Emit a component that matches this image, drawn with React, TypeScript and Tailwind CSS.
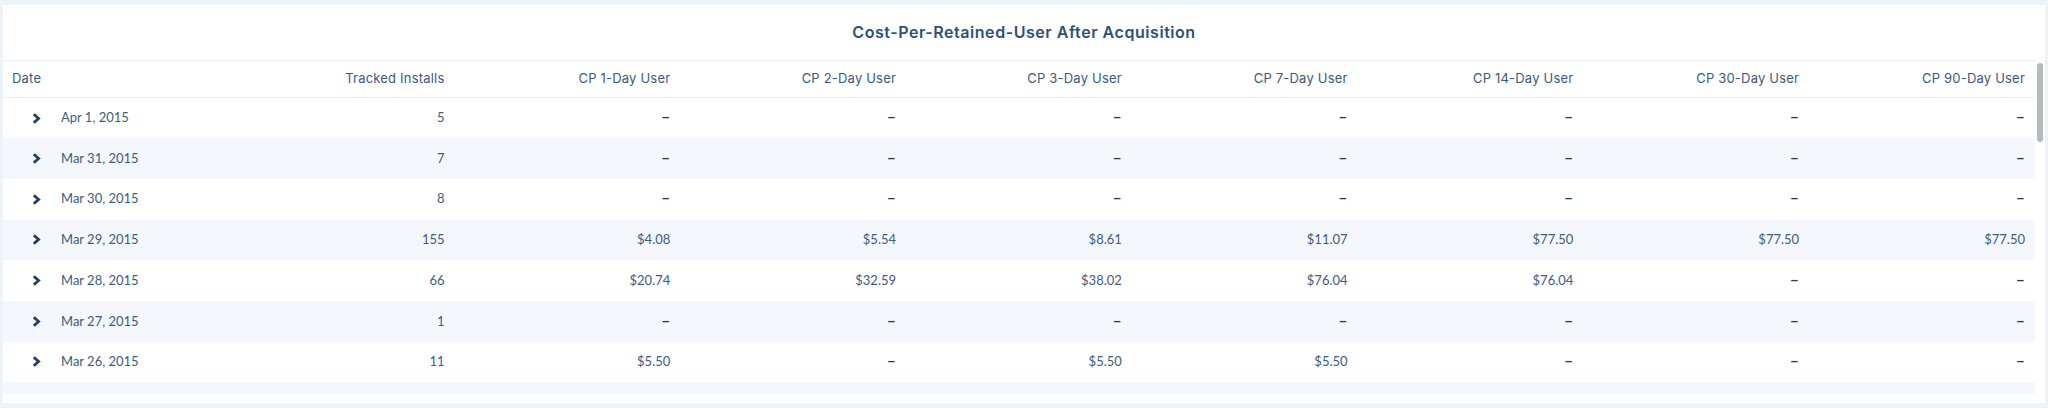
import React from 'react';

type Row = { date: string; installs: number; values: (string | null)[] };

const rows: Row[] = [
  { date: 'Apr 1, 2015', installs: 5, values: [null, null, null, null, null, null, null] },
  { date: 'Mar 31, 2015', installs: 7, values: [null, null, null, null, null, null, null] },
  { date: 'Mar 30, 2015', installs: 8, values: [null, null, null, null, null, null, null] },
  { date: 'Mar 29, 2015', installs: 155, values: ['$4.08', '$5.54', '$8.61', '$11.07', '$77.50', '$77.50', '$77.50'] },
  { date: 'Mar 28, 2015', installs: 66, values: ['$20.74', '$32.59', '$38.02', '$76.04', '$76.04', null, null] },
  { date: 'Mar 27, 2015', installs: 1, values: [null, null, null, null, null, null, null] },
  { date: 'Mar 26, 2015', installs: 11, values: ['$5.50', null, '$5.50', '$5.50', null, null, null] },
];

const columns = [
  'CP 1-Day User',
  'CP 2-Day User',
  'CP 3-Day User',
  'CP 7-Day User',
  'CP 14-Day User',
  'CP 30-Day User',
  'CP 90-Day User',
];

const Chevron = () => (
  <svg width="9" height="11" viewBox="0 0 9 11" className="shrink-0">
    <path d="M1.8 1.2 L6.6 5.5 L1.8 9.8" fill="none" stroke="#1f3e62" strokeWidth="2.8" strokeLinejoin="miter" />
  </svg>
);

export default function App() {
  return (
    <div className="w-[2048px] h-[408px] bg-[#eef3f8] px-[3px] py-[5px]">
      <div className="h-[398px] bg-white flex flex-col pb-[9px]">
        {/* Title */}
        <div className="h-[55px] shrink-0 flex items-center justify-center">
          <h2 className="font-['Inter',sans-serif] font-semibold text-[16px] tracking-[0.55px] text-[#2b5179] pb-[2px]">
            Cost-Per-Retained-User After Acquisition
          </h2>
        </div>

        {/* Table + scrollbar */}
        <div className="flex-1 min-h-0 flex">
          <div className="flex-1 min-w-0 overflow-hidden">
            <table className="w-full table-fixed border-collapse">
              <thead>
                <tr className="h-[37px] border-y border-[#e6edf4] font-['Inter',sans-serif] text-[13px] text-[#3b5a7b] tracking-[0.2px]">
                  <th className="font-normal text-left pl-[9px]">Date</th>
                  <th className="font-normal text-right pr-[10px]">Tracked Installs</th>
                  {columns.map((c) => (
                    <th key={c} className="font-normal text-right pr-[10px]">
                      {c}
                    </th>
                  ))}
                </tr>
              </thead>
              <tbody className="font-['Lato',sans-serif] text-[13px] text-[#3d5c7e]">
                {rows.map((r, i) => (
                  <tr key={r.date} className={`h-[40.7px] ${i % 2 === 1 ? 'bg-[#f4f7fb]' : 'bg-white'}`}>
                    <td className="pl-[29px]">
                      <div className="flex items-center gap-[20px]">
                        <Chevron />
                        <span>{r.date}</span>
                      </div>
                    </td>
                    <td className="text-right pr-[10px]">{r.installs}</td>
                    {r.values.map((v, j) => (
                      <td key={j} className="text-right pr-[10px]">
                        {v ?? <span className="font-bold text-[16px] leading-none text-[#3a3a3a]">–</span>}
                      </td>
                    ))}
                  </tr>
                ))}
                <tr className="h-[13px] bg-[#f4f7fb]">
                  <td colSpan={9} />
                </tr>
              </tbody>
            </table>
          </div>
          {/* scrollbar */}
          <div className="w-[10px] shrink-0 bg-white flex justify-center pt-[3px]">
            <div className="w-[6px] h-[79px] rounded-full bg-[#b7babd]" />
          </div>
        </div>
      </div>
    </div>
  );
}
